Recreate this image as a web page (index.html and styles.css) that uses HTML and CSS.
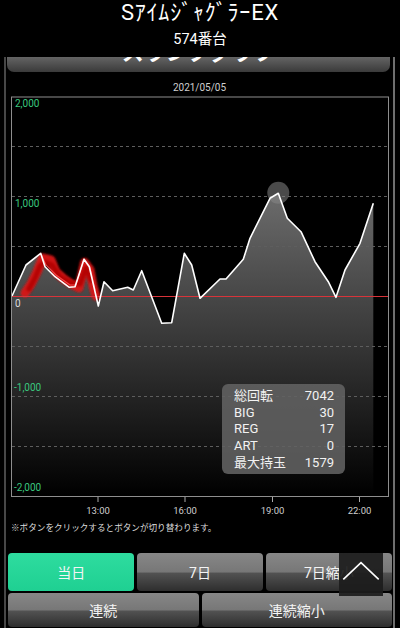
FILE: index.html
```html
<!DOCTYPE html>
<html lang="ja">
<head>
<meta charset="utf-8">
<title>SｱｲﾑｼﾞｬｸﾞﾗｰEX 574番台</title>
<link rel="stylesheet" href="styles.css">
</head>
<body>
<header class="head">
  <div class="title">SｱｲﾑｼﾞｬｸﾞﾗｰEX</div>
  <div class="sub">574番台</div>
</header>
<main class="frame">
  <div class="tabbar"><span class="tabtitle">スランプグラフ</span></div>
  <div class="date">2021/05/05</div>
  <div class="chart">
    <svg class="graph" width="378" height="420" viewBox="11 96 378 420" xmlns="http://www.w3.org/2000/svg">
      <defs>
        <linearGradient id="areafill" gradientUnits="userSpaceOnUse" x1="0" y1="193" x2="0" y2="496">
          <stop offset="0" stop-color="#6c6c6c"/>
          <stop offset="1" stop-color="#000"/>
        </linearGradient>
        <filter id="soft" x="-20%" y="-20%" width="140%" height="140%">
          <feGaussianBlur stdDeviation="0.8"/>
        </filter>
      </defs>
      <path class="area" d="M12,296 L26,265 L40.7,253.3 L45,266.7 L55,276.7 L69.3,287.3 L75,286.7 L84,259.3 L89.3,266.7 L98.3,306 L104,281.7 L112.7,290.7 L127.7,287.3 L133.3,290 L141.7,270.7 L161.7,323.3 L171.7,322.7 L184.3,253.3 L191.7,265 L200,298.3 L220,279 L226,279 L243.3,259.3 L250,238.3 L270,198.3 L278.3,193.3 L287.3,218.3 L301,231.7 L315,261.7 L328.3,281.7 L336,297.3 L345,270 L360,243.3 L373.3,203.3 L373.3,496.5 L12,496.5 Z"/>
      <g class="grid">
        <line x1="12" x2="388" y1="146.5" y2="146.5"/>
        <line x1="12" x2="388" y1="196.5" y2="196.5"/>
        <line x1="12" x2="388" y1="246.5" y2="246.5"/>
        <line x1="12" x2="388" y1="346.5" y2="346.5"/>
        <line x1="12" x2="388" y1="396.5" y2="396.5"/>
        <line x1="12" x2="388" y1="446.5" y2="446.5"/>
      </g>
      <circle class="dot" cx="278.3" cy="192.7" r="11"/>
      <polyline class="redband" points="25,293 31,284 37,272 42.5,258 51,260 56,272 64,279 73,285 79,288 84.5,262.5 90,270 93,286 96,296"/>
      <polyline class="redband2" points="29,289 35,278 40,266 45,262 52,265 60,277 71,283 80,284 86,268 91,280"/>
      <polyline class="redthin" points="41,254 46,265 56,275 70,285 76,285 84,259 90,267 95,290"/>
      <line class="zero" x1="12" x2="388" y1="296.5" y2="296.5"/>
      <polyline class="line" points="12,296 26,265 40.7,253.3 45,266.7 55,276.7 69.3,287.3 75,286.7 84,259.3 89.3,266.7 98.3,306 104,281.7 112.7,290.7 127.7,287.3 133.3,290 141.7,270.7 161.7,323.3 171.7,322.7 184.3,253.3 191.7,265 200,298.3 220,279 226,279 243.3,259.3 250,238.3 270,198.3 278.3,193.3 287.3,218.3 301,231.7 315,261.7 328.3,281.7 336,297.3 345,270 360,243.3 373.3,203.3"/>
      <rect class="border" x="11.5" y="97" width="377" height="399.5"/>
      <g class="ticks">
        <line x1="98" x2="98" y1="497" y2="502"/>
        <line x1="185" x2="185" y1="497" y2="502"/>
        <line x1="272.5" x2="272.5" y1="497" y2="502"/>
        <line x1="359.5" x2="359.5" y1="497" y2="502"/>
      </g>
      <text class="ylab" x="15" y="106.8">2,000</text>
      <text class="ylab" x="15" y="206.8">1,000</text>
      <text class="ylab zlab" x="15" y="306.8">0</text>
      <text class="ylab" x="14" y="390.5">-1,000</text>
      <text class="ylab" x="14" y="490.5">-2,000</text>
      <text class="xlab" x="98" y="514">13:00</text>
      <text class="xlab" x="185" y="514">16:00</text>
      <text class="xlab" x="272.5" y="514">19:00</text>
      <text class="xlab" x="359.5" y="514">22:00</text>
    </svg>
    <div class="tip">
      <span>総回転</span><span class="v">7042</span>
      <span>BIG</span><span class="v">30</span>
      <span>REG</span><span class="v">17</span>
      <span>ART</span><span class="v">0</span>
      <span>最大持玉</span><span class="v">1579</span>
    </div>
  </div>
  <p class="note">※ボタンをクリックするとボタンが切り替わります。</p>
  <div class="btns row1">
    <button class="btn on">当日</button>
    <button class="btn">7日</button>
    <button class="btn">7日縮小</button>
  </div>
  <div class="btns row2">
    <button class="btn">連続</button>
    <button class="btn">連続縮小</button>
  </div>
</main>
<a class="totop" href="#top" aria-label="ページトップへ">
  <svg width="44" height="43" viewBox="0 0 44 43" xmlns="http://www.w3.org/2000/svg">
    <polyline class="chev" points="4.3,26.3 22,9.7 39.7,26.3"/>
  </svg>
</a>
</body>
</html>
```
FILE: styles.css
```css
* { box-sizing: border-box; }
html, body {
  margin: 0;
  background: #000;
  overflow: hidden;
}
body {
  width: 400px;
  height: 628px;
  font-family: Roboto, "Noto Sans CJK JP", sans-serif;
  color: #fff;
}
.head {
  height: 57px;
  text-align: center;
}
.title {
  font-size: 22px;
  line-height: 26px;
  letter-spacing: 0.8px;
}
.sub {
  margin-top: 5px;
  font-size: 14.5px;
  line-height: 18px;
}
.frame {
  display: block;
  margin-left: 4px;
  width: 391px;
  height: 571px;
  border-left: 2px solid #474747;
  border-right: 2px solid #6e6e6e;
}
.tabbar {
  height: 15px;
  margin: 0 3px 0 1px;
  border-radius: 0 0 7px 7px;
  background: linear-gradient(#646464, #3a3a3a);
  overflow: hidden;
  display: flex;
  justify-content: center;
  align-items: flex-end;
  padding-bottom: 8px;
}
.tabtitle {
  font-size: 22px;
  line-height: 22px;
  font-weight: 700;
  white-space: nowrap;
  color: #fff;
}
.date {
  text-align: center;
  font-size: 10px;
  line-height: 11px;
  padding: 10px 0 3px;
  color: #cfcfcf;
}
.chart {
  position: relative;
  margin-left: 5px;
  width: 378px;
  height: 420px;
}
.graph { display: block; }
.area { fill: url(#areafill); }
.grid line {
  stroke: #5e5e5e;
  stroke-width: 1;
  stroke-dasharray: 3 3;
}
.dot { fill: rgba(135, 135, 135, 0.55); }
.redband {
  fill: none;
  stroke: #d81414;
  stroke-width: 9;
  stroke-linejoin: round;
  stroke-linecap: round;
  opacity: 0.95;
  filter: url(#soft);
}
.redband2 {
  fill: none;
  stroke: #b00000;
  stroke-width: 5;
  stroke-linejoin: round;
  stroke-linecap: round;
  opacity: 0.85;
  filter: url(#soft);
}
.redthin {
  fill: none;
  stroke: #ff5050;
  stroke-width: 1.2;
  opacity: 0.85;
}
.zero {
  stroke: #d8343a;
  stroke-width: 1;
}
.line {
  fill: none;
  stroke: #fff;
  stroke-width: 1.6;
  stroke-linejoin: round;
}
.border {
  fill: none;
  stroke: #8e8e8e;
  stroke-width: 1;
}
.ticks line {
  stroke: #aaa;
  stroke-width: 1;
}
.ylab {
  font-family: Roboto, sans-serif;
  font-size: 10px;
  fill: #3ac77e;
}
.zlab { fill: #ddd; }
.xlab {
  font-family: Roboto, sans-serif;
  font-size: 9.5px;
  fill: #cfcfcf;
  text-anchor: middle;
}
.tip {
  position: absolute;
  left: 211px;
  top: 288px;
  width: 123px;
  padding: 4px 11px 2px 12px;
  border-radius: 6px;
  background: rgba(98, 98, 98, 0.88);
  display: grid;
  grid-template-columns: 1fr auto;
  font-size: 13px;
  line-height: 16.7px;
  color: #f2f2f2;
}
.tip .v { text-align: right; }
.note {
  margin: 6px 0 0 5px;
  font-size: 8.6px;
  line-height: 13px;
  color: #dedede;
  white-space: nowrap;
}
.btns {
  display: grid;
  margin: 0 1px 0 2px;
}
.row1 {
  grid-template-columns: repeat(3, 1fr);
  column-gap: 2.5px;
  height: 38px;
  margin-top: 18px;
}
.row2 {
  grid-template-columns: 1fr 1fr;
  column-gap: 3px;
  height: 34px;
  margin-top: 1.5px;
}
.btn {
  border: 0;
  border-radius: 4px;
  padding: 0;
  font-family: Roboto, "Noto Sans CJK JP", sans-serif;
  font-size: 14px;
  color: #f4f4f4;
  background: linear-gradient(#878787 0%, #777 50%, #525252 53%, #2e2e2e 100%);
}
.btn.on {
  background: linear-gradient(#2edc9f, #1fd092);
}
.totop {
  position: fixed;
  left: 339px;
  top: 553px;
  width: 44px;
  height: 43px;
  background: rgba(28, 28, 28, 0.92);
  display: block;
}
.totop svg { display: block; }
.chev {
  fill: none;
  stroke: #fff;
  stroke-width: 1.6;
}
```
